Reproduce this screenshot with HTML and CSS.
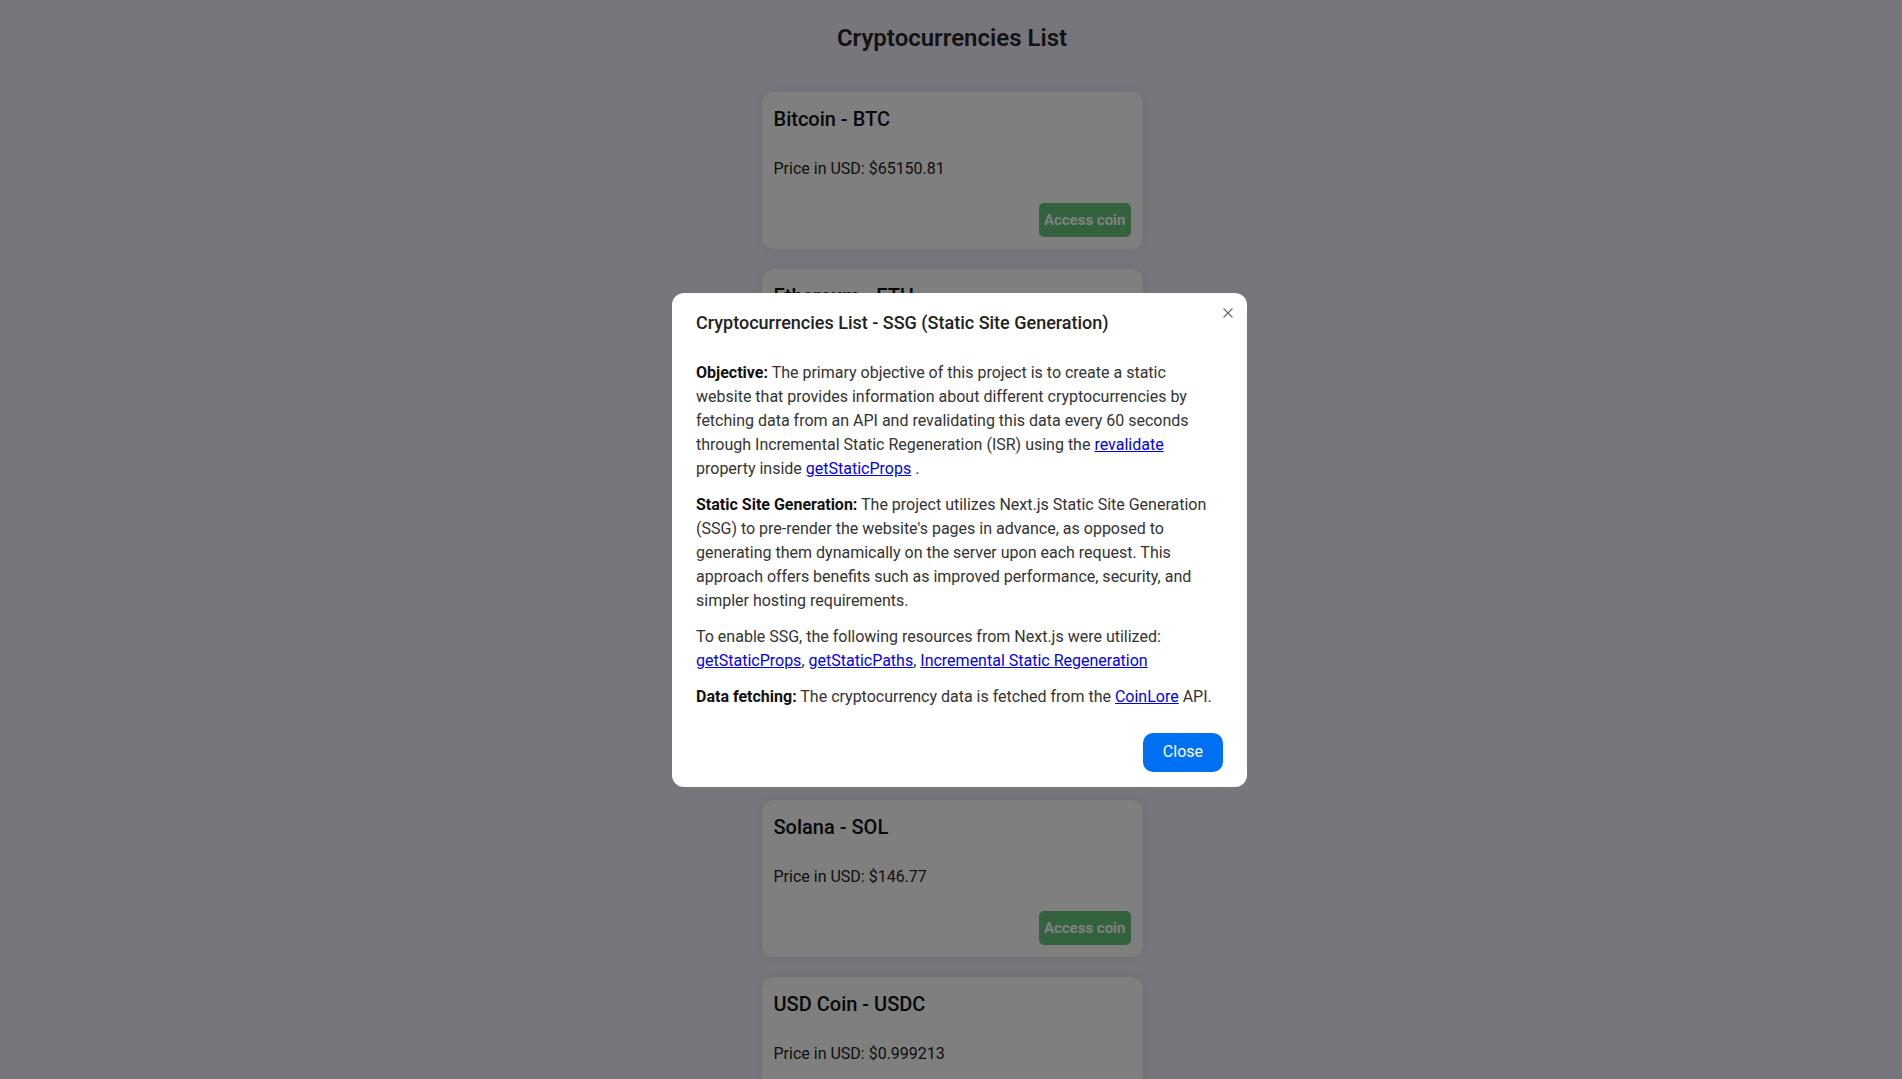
FILE: index.html
```html
<!DOCTYPE html>
<html lang="en">
<head>
<meta charset="utf-8">
<title>Cryptocurrencies List</title>
<link rel="stylesheet" href="styles.css">
</head>
<body>
<main class="page">
  <h1 class="page-title">Cryptocurrencies List</h1>
  <ul class="coin-list">
    <li class="coin-card">
      <h5 class="coin-name">Bitcoin - BTC</h5>
      <p class="coin-price">Price in USD: $65150.81</p>
      <div class="coin-actions"><a class="btn-access" href="#">Access coin</a></div>
    </li>
    <li class="coin-card">
      <h5 class="coin-name">Ethereum - ETH</h5>
      <p class="coin-price">Price in USD: $3512.40</p>
      <div class="coin-actions"><a class="btn-access" href="#">Access coin</a></div>
    </li>
    <li class="coin-card">
      <h5 class="coin-name">Tether - USDT</h5>
      <p class="coin-price">Price in USD: $1.00</p>
      <div class="coin-actions"><a class="btn-access" href="#">Access coin</a></div>
    </li>
    <li class="coin-card">
      <h5 class="coin-name">BNB - BNB</h5>
      <p class="coin-price">Price in USD: $589.23</p>
      <div class="coin-actions"><a class="btn-access" href="#">Access coin</a></div>
    </li>
    <li class="coin-card">
      <h5 class="coin-name">Solana - SOL</h5>
      <p class="coin-price">Price in USD: $146.77</p>
      <div class="coin-actions"><a class="btn-access" href="#">Access coin</a></div>
    </li>
    <li class="coin-card">
      <h5 class="coin-name">USD Coin - USDC</h5>
      <p class="coin-price">Price in USD: $0.999213</p>
      <div class="coin-actions"><a class="btn-access" href="#">Access coin</a></div>
    </li>
    <li class="coin-card">
      <h5 class="coin-name">XRP - XRP</h5>
      <p class="coin-price">Price in USD: $0.5236</p>
      <div class="coin-actions"><a class="btn-access" href="#">Access coin</a></div>
    </li>
  </ul>
</main>

<div class="backdrop"></div>
<div class="modal">
  <div class="modal-dialog" role="dialog" aria-modal="true">
    <button class="modal-x" type="button" aria-label="Close">
      <svg viewBox="0 0 10 10" width="10" height="10"><path d="M0.5 0.5 L9.5 9.5 M9.5 0.5 L0.5 9.5"/></svg>
    </button>
    <h5 class="modal-title">Cryptocurrencies List - SSG (Static Site Generation)</h5>
    <div class="modal-body">
      <p><strong>Objective:</strong> The primary objective of this project is to create a static website that provides information about different cryptocurrencies by fetching data from an API and revalidating this data every 60 seconds through Incremental Static Regeneration (ISR) using the <a href="#">revalidate</a> property inside <a href="#">getStaticProps</a> .</p>
      <p><strong>Static Site Generation:</strong> The project utilizes Next.js Static Site Generation (SSG) to pre-render the website's pages in advance, as opposed to generating them dynamically on the server upon each request. This approach offers benefits such as improved performance, security, and simpler hosting requirements.</p>
      <p>To enable SSG, the following resources from Next.js were utilized: <a href="#">getStaticProps</a>, <a href="#">getStaticPaths</a>, <a href="#">Incremental Static Regeneration</a></p>
      <p><strong>Data fetching:</strong> The cryptocurrency data is fetched from the <a href="#">CoinLore</a> API.</p>
    </div>
    <div class="modal-footer">
      <button class="btn-close" type="button">Close</button>
    </div>
  </div>
</div>
</body>
</html>
```
FILE: styles.css
```css
* { box-sizing: border-box; }

html, body {
  margin: 0;
  padding: 0;
}

body {
  background: #eeedfb;
  font-family: Roboto, "Liberation Sans", sans-serif;
  font-size: 16px;
  line-height: 24px;
  color: #222;
  overflow: hidden;
  height: 1079px;
}

.page {
  padding-left: 2px;
}

.page-title {
  margin: 24px 0 0;
  font-size: 24px;
  line-height: 29px;
  font-weight: 600;
  text-align: center;
  color: #262626;
}

.coin-list {
  list-style: none;
  margin: 39px auto 0;
  padding: 0;
  width: 381px;
  display: flex;
  flex-direction: column;
  gap: 20px;
}

.coin-card {
  background: #fff;
  border-radius: 12px;
  padding: 15px 12px 11px;
  box-shadow: 0 0 12px rgba(0, 0, 0, 0.08);
  height: 157px;
}

.coin-name {
  margin: 0 0 26px;
  font-size: 20px;
  line-height: 24px;
  font-weight: 500;
  color: #111;
}

.coin-price {
  margin: 0 0 22px;
  font-size: 16px;
  line-height: 24px;
  color: #222;
}

.coin-actions {
  display: flex;
  justify-content: flex-end;
}

.btn-access {
  display: inline-block;
  height: 34px;
  padding: 5px 5px;
  font-size: 15px;
  line-height: 24px;
  font-weight: 700;
  color: #fff;
  background: #66c67c;
  border-radius: 5px;
  text-decoration: none;
}

.backdrop {
  position: fixed;
  inset: 0;
  background: rgba(0, 0, 0, 0.5);
}

.modal {
  position: fixed;
  inset: 0;
  display: flex;
  align-items: center;
  justify-content: center;
}

.modal-dialog {
  position: relative;
  width: 575px;
  margin-left: 17px;
  background: #fff;
  border-radius: 12px;
  padding: 16px 24px 15px;
  color: #333;
}

.modal-x {
  position: absolute;
  top: 14px;
  right: 13px;
  width: 12px;
  height: 12px;
  padding: 1px;
  border: 0;
  background: transparent;
  display: flex;
  align-items: center;
  justify-content: center;
  cursor: pointer;
}

.modal-x svg {
  width: 10px;
  height: 10px;
  stroke: #666;
  stroke-width: 1.1;
  fill: none;
}

.modal-title {
  margin: 0 0 25px;
  font-size: 18px;
  line-height: 27px;
  font-weight: 500;
  color: #222;
}

.modal-body p {
  margin: 0 0 12px;
}

.modal-body strong {
  font-weight: 700;
  color: #111;
}

.modal-body a {
  color: #0000ee;
  text-decoration: underline;
}

.modal-footer {
  display: flex;
  justify-content: flex-end;
  padding-top: 12px;
}

.btn-close {
  font-family: inherit;
  font-size: 16px;
  line-height: 24px;
  padding: 7px 20px 8px;
  border: 0;
  border-radius: 10px;
  background: #0070f3;
  color: #fff;
  cursor: pointer;
}
```
